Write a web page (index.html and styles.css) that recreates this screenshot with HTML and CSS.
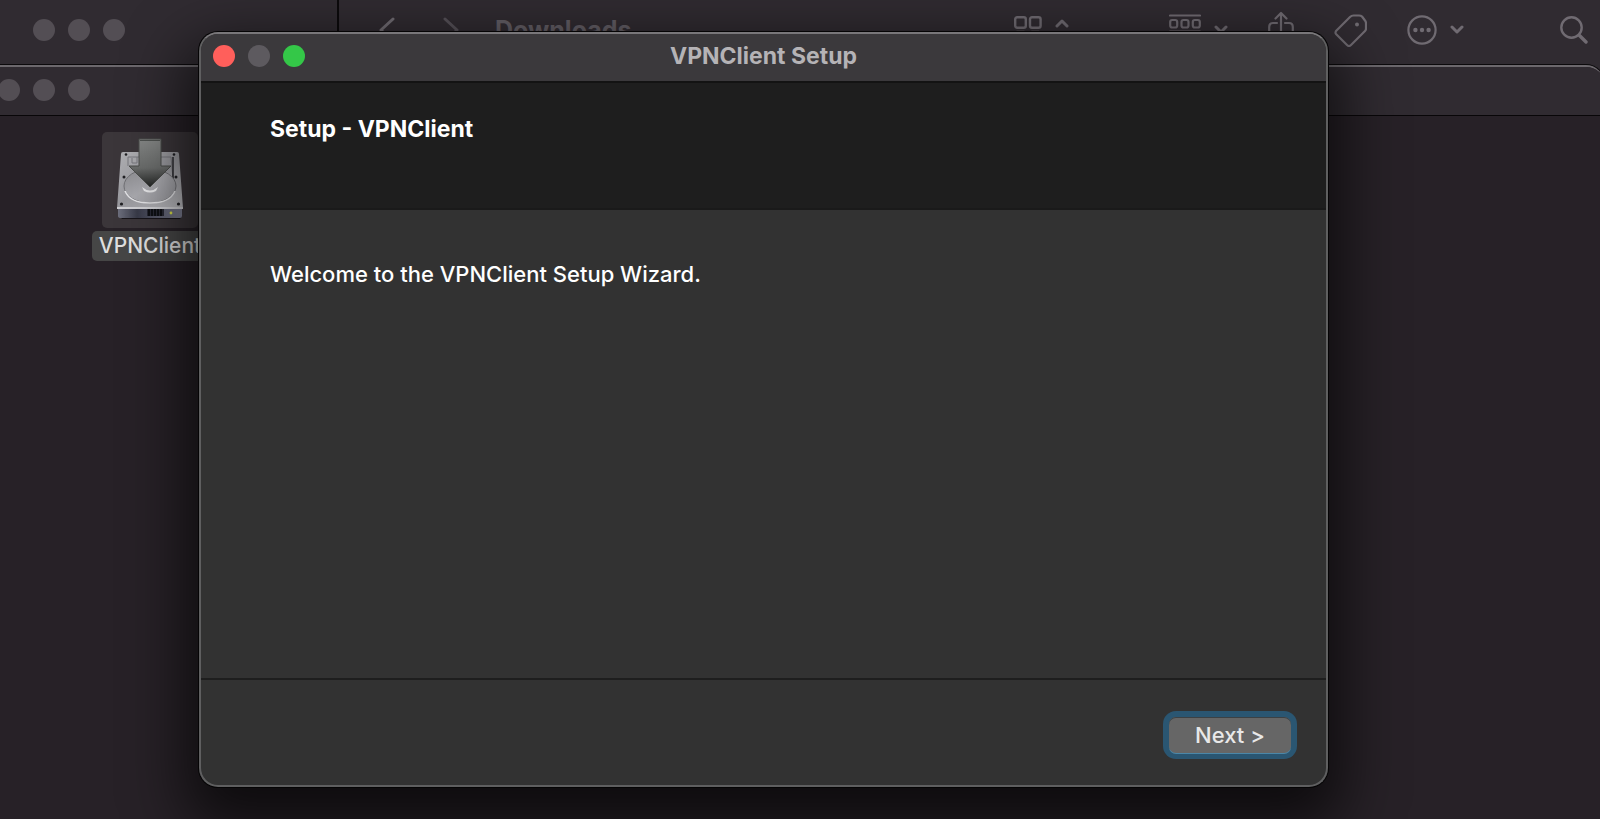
FILE: index.html
```html
<!DOCTYPE html>
<html lang="en">
<head>
<meta charset="utf-8">
<title>VPNClient Setup</title>
<link rel="stylesheet" href="styles.css">
</head>
<body>
<main class="desktop">
  <section class="finder" aria-label="Downloads">
    <div class="finder-side">
      <span class="dot"></span><span class="dot"></span><span class="dot"></span>
    </div>
    <div class="toolbar">
      <button class="tool" aria-label="Back"><svg width="16" height="26" viewBox="0 0 16 26"><path d="M14 2 2 13l12 11"/></svg></button>
      <button class="tool tool-forward" aria-label="Forward"><svg width="16" height="26" viewBox="0 0 16 26"><path d="M2 2l12 11L2 24"/></svg></button>
      <h2 class="toolbar-title">Downloads</h2>
      <div class="tools">
        <button class="tool tool-pair" aria-label="View as icons">
          <svg width="28" height="28" viewBox="0 0 28 28"><g stroke-width="2.4"><rect x="1.2" y="1.2" width="10.600" height="10.600" rx="2"/><rect x="16" y="1.2" width="10.600" height="10.600" rx="2"/><rect x="1.2" y="16" width="10.600" height="10.600" rx="2"/><rect x="16" y="16" width="10.600" height="10.600" rx="2"/></g></svg>
          <svg width="14" height="24" viewBox="0 0 14 24"><path d="M2 8l5-5 5 5M2 16l5 5 5-5"/></svg>
        </button>
        <button class="tool tool-pair tool-group" aria-label="Group items">
          <svg width="32" height="32" viewBox="0 0 32 32"><g stroke-width="2.2"><path d="M1 1.500h30M1 17.500h30"/><rect x="1.2" y="6" width="7" height="7.500" rx="2"/><rect x="12.500" y="6" width="7" height="7.500" rx="2"/><rect x="23.800" y="6" width="7" height="7.500" rx="2"/><rect x="1.200" y="22" width="7" height="8" rx="2"/><rect x="12.500" y="22" width="7" height="8" rx="2"/><rect x="23.800" y="22" width="7" height="8" rx="2"/></g></svg>
          <svg width="14" height="10" viewBox="0 0 14 10"><path d="M2 2l5 5 5-5"/></svg>
        </button>
        <button class="tool" aria-label="Share"><svg width="26" height="38" viewBox="0 0 26 38"><g stroke-width="2.2"><path d="M13 23V2M7.500 7.500 13 2l5.500 5.500M9 12H5q-3.800 0-3.800 4v14q0 4 4 4h15.600q4 0 4-4V16q0-4-3.800-4h-4"/></g></svg></button>
        <button class="tool" aria-label="Tags"><svg width="33" height="33" viewBox="0 0 33 33"><g stroke-width="2.2"><path d="M2 17 16 3q1.500-1.500 3.500-1.500H25q2 0 3 1l3 4q1 1 1 3v5q0 1.500-1 2.500L17 31q-2 2-4 0L2 20q-1-1 0-3z"/></g><circle class="solid" cx="23" cy="10.500" r="2"/></svg></button>
        <button class="tool tool-pair" aria-label="More actions">
          <svg width="30" height="30" viewBox="0 0 30 30"><g stroke-width="2.2"><circle cx="15" cy="15" r="13.6"/></g><g class="solid"><circle cx="8.4" cy="15" r="2.2"/><circle cx="15" cy="15" r="2.2"/><circle cx="21.6" cy="15" r="2.2"/></g></svg>
          <svg width="14" height="10" viewBox="0 0 14 10"><path d="M2 2l5 5 5-5"/></svg>
        </button>
        <button class="tool tool-search" aria-label="Search"><svg width="28" height="28" viewBox="0 0 28 28"><g stroke-width="2.4"><circle cx="11.5" cy="11.5" r="10.2"/></g><path stroke-width="3.4" d="M19.5 19.5 26 26"/></svg></button>
      </div>
    </div>
  </section>

  <section class="volume" aria-label="VPNClient volume">
    <header class="volume-bar">
      <span class="dot"></span><span class="dot"></span><span class="dot"></span>
    </header>
    <div class="volume-body">
      <figure class="file">
        <svg class="file-icon" viewBox="0 0 96 96" aria-hidden="true">
          <defs>
            <linearGradient id="lid" x1="0" y1="0" x2="1" y2="1"><stop offset="0" stop-color="#b0b0b4"/><stop offset=".5" stop-color="#98989d"/><stop offset="1" stop-color="#bdbdc1"/></linearGradient>
            <linearGradient id="platter" x1="0" y1="0" x2="1" y2="1"><stop offset="0" stop-color="#88888c"/><stop offset=".5" stop-color="#a9a9ae"/><stop offset="1" stop-color="#97979c"/></linearGradient>
            <linearGradient id="front" x1="0" y1="0" x2="1" y2="0"><stop offset="0" stop-color="#6c6e7c"/><stop offset=".3" stop-color="#383a48"/><stop offset="1" stop-color="#7b7d90"/></linearGradient>
            <linearGradient id="arrow" x1="0" y1="0" x2="0" y2="1"><stop offset="0" stop-color="#858786"/><stop offset=".6" stop-color="#6a6c6b"/><stop offset="1" stop-color="#222423"/></linearGradient>
          </defs>
          <path d="M18 84h62l-2 3H20z" fill="#171419"/>
          <path d="M21 20h54q2 0 2 2l4 54H15l4-54q0-2 2-2z" fill="url(#lid)"/>
          <path d="M26 25h43l2 22M26 25v9M35 25v6h-5v-5" fill="none" stroke="#77777c"/>
          <path d="M71 25v22" fill="none" stroke="#29292d" stroke-width="1.5"/>
          <ellipse cx="48" cy="54" rx="26" ry="17" fill="url(#platter)" stroke="#707074"/>
          <path d="M23 59q5 12 25 12t25-12" fill="none" stroke="#e2e2e5" stroke-width="1.5"/>
          <path d="M40 55q8 7 16 0l-2 4q-6 3-12 0z" fill="#e7e7e9"/>
          <path d="M15 75h66v2H15z" fill="#cfcfd3"/>
          <path d="M16 77h64v7q0 2-2 2H19q-3 0-3-2z" fill="url(#front)"/>
          <path d="M45 77h17v7H45z" fill="#272833"/>
          <path d="M47 77v7M50 77v7M53 77v7M56 77v7M59 77v7" stroke="#07080b" stroke-width="1.5"/>
          <circle cx="69" cy="81" r="1.4" fill="#d6dc46"/>
          <g fill="#202024"><circle cx="24" cy="22.500" r="1.300"/><circle cx="72" cy="22.500" r="1.300"/><circle cx="22" cy="45" r="1.500"/><circle cx="74" cy="45" r="1.500"/><circle cx="19.500" cy="72" r="1.600"/><circle cx="76.500" cy="72" r="1.600"/></g>
          <path d="M37 7h22v27h10L48 55 27 34h10z" fill="url(#arrow)" stroke="#4a4c4a"/>
          <path d="M38 8.500h20" stroke="#4d504e"/>
        </svg>
        <figcaption class="file-name">VPNClient</figcaption>
      </figure>
    </div>
  </section>

  <section class="dialog" role="dialog" aria-labelledby="dialog-title">
    <header class="dialog-bar">
      <div class="lights">
        <button class="dot dot-close" aria-label="Close"></button>
        <button class="dot dot-off" aria-label="Minimize" disabled></button>
        <button class="dot dot-zoom" aria-label="Zoom"></button>
      </div>
      <h1 class="dialog-title" id="dialog-title">VPNClient Setup</h1>
    </header>
    <div class="banner"><h2 class="banner-title">Setup - VPNClient</h2></div>
    <div class="content"><p class="message">Welcome to the VPNClient Setup Wizard.</p></div>
    <footer class="actions"><button class="next">Next &gt;</button></footer>
  </section>
</main>
</body>
</html>
```

FILE: styles.css
```css
* {
  box-sizing: border-box;
}

body {
  margin: 0;
  font-family: Inter, "Liberation Sans", sans-serif;
  font-size: 23px;
  line-height: 28px;
  color: #fff;
  background: #272127;
}

h1,
h2,
p,
figure {
  margin: 0;
  font-size: inherit;
}

button {
  padding: 0;
  border: 0;
  background: none;
  font: inherit;
  color: inherit;
}

.desktop {
  position: relative;
  height: 100vh;
  overflow: hidden;
}

.dot {
  flex: none;
  width: 22px;
  height: 22px;
  border-radius: 50%;
  background: #534e54;
}

/* Downloads window */
.finder {
  display: flex;
  height: 80px;
  background: #302b31;
}

.finder-side {
  flex: none;
  display: flex;
  gap: 13px;
  width: 339px;
  padding: 19px 33px;
  border-right: 2px solid #0c0a0c;
}

.toolbar {
  flex: 1;
  display: flex;
  align-items: center;
  height: 60px;
  padding: 0 12px 0 40px;
  color: #706b72;
}

.toolbar-title {
  margin-left: 36px;
  font-size: 25px;
  font-weight: 700;
  color: #625d64;
}

.tools {
  display: flex;
  align-items: center;
  gap: 40px;
  margin-left: auto;
}

.tool {
  display: flex;
  align-items: center;
}

.tool svg {
  display: block;
  fill: none;
  stroke: currentColor;
  stroke-width: 3;
  stroke-linecap: round;
  stroke-linejoin: round;
}

.tool .solid {
  fill: currentColor;
  stroke: none;
}

.tool-forward {
  margin-left: 48px;
  color: #565158;
}

.tool-pair {
  gap: 13px;
}

.tool-group {
  margin-left: 60px;
}

.tool-search {
  margin-left: 56px;
}

/* Mounted volume window */
.volume {
  position: absolute;
  top: 65px;
  right: -4px;
  bottom: -40px;
  left: -16px;
  border-top: 2px solid #6c686d;
  border-radius: 18px;
  background: #272127;
  box-shadow: 0 0 0 1px #0c0a0c;
  overflow: hidden;
}

.volume-bar {
  display: flex;
  gap: 13px;
  padding: 12px 14px 14px;
  border-bottom: 1px solid #080608;
  background: #302b31;
}

.volume-body {
  padding: 16px 104px;
}

.file {
  display: flex;
  flex-direction: column;
  align-items: center;
  gap: 3px;
  width: 124px;
}

.file-icon {
  width: 96px;
  height: 96px;
  border-radius: 5px;
  background: #3b363a;
}

.file-name {
  padding: 1px 7px;
  border-radius: 5px;
  font-size: 21px;
  font-weight: 500;
  background: #464646;
  color: #dedede;
}

/* Setup wizard */
.dialog {
  position: absolute;
  top: 32px;
  right: 272px;
  bottom: 32px;
  left: 199px;
  display: flex;
  flex-direction: column;
  border: 2px solid #5f5f60;
  border-top-color: #79777a;
  border-radius: 19px;
  background: #323232;
  box-shadow: 0 0 0 1px #050405, 0 26px 60px 14px rgba(0, 0, 0, 0.65);
  overflow: hidden;
}

.dialog-bar {
  display: grid;
  grid-template-columns: 1fr auto 1fr;
  align-items: center;
  height: 49px;
  padding: 0 12px 3px;
  border-bottom: 2px solid #131313;
  background: #3b393c;
}

.lights {
  display: flex;
  gap: 13px;
}

.dot-close {
  background: #ff5f5b;
}

.dot-off {
  background: #5d5a5f;
}

.dot-zoom {
  background: #34c748;
}

.dialog-title {
  font-weight: 700;
  color: #b5b3b6;
}

.banner {
  height: 127px;
  padding: 32px 69px;
  border-bottom: 2px solid #1a1a1a;
  background: #1e1e1e;
}

.banner-title {
  font-weight: 700;
}

.content {
  flex: 1;
  padding: 50px 69px;
}

.message {
  font-size: 22px;
  font-weight: 500;
}

.actions {
  display: flex;
  justify-content: flex-end;
  padding: 37px 35px 32px;
  border-top: 2px solid #1e1e1e;
}

.next {
  width: 122px;
  height: 36px;
  border-radius: 7px;
  background: #666;
  color: #e8e8e8;
  font-size: 22px;
  font-weight: 500;
  box-shadow: inset 0 1px #3c4144, 0 1px #4b87a8, 0 0 0 6px #2a5672;
}
```
